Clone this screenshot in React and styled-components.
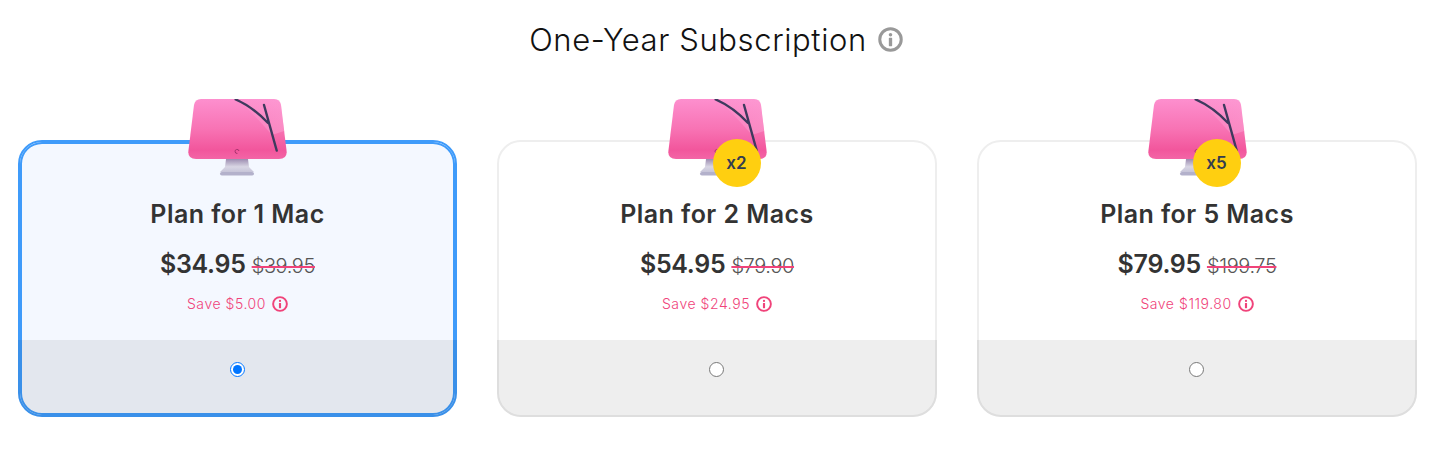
import React, { useState } from 'react'
import styled, { createGlobalStyle } from 'styled-components'

const plans = [
    { name: 'Plan for 1 Mac', price: '$34.95', old: '$39.95', save: 'Save $5.00' },
    { name: 'Plan for 2 Macs', price: '$54.95', old: '$79.90', save: 'Save $24.95', badge: 'x2' },
    { name: 'Plan for 5 Macs', price: '$79.95', old: '$199.75', save: 'Save $119.80', badge: 'x5' },
]

const InfoIcon = ({ size, color }) => (
    <svg width={size} height={size} viewBox="0 0 24 24" fill="none">
        <circle cx="12" cy="12" r="10.3" stroke={color} strokeWidth="2.9" />
        <circle cx="12" cy="7.4" r="1.7" fill={color} />
        <rect x="10.4" y="10.4" width="3.2" height="8" rx="0.6" fill={color} />
    </svg>
)

const MacIcon = ({ id }) => (
    <svg width="99" height="78" viewBox="0 0 99 78" fill="none">
        <defs>
            <linearGradient id={`screen${id}`} x1="0" y1="0" x2="0" y2="1">
                <stop offset="0" stopColor="#fd8fce" />
                <stop offset="0.5" stopColor="#f873b4" />
                <stop offset="0.85" stopColor="#f2569c" />
                <stop offset="1" stopColor="#f365a6" />
            </linearGradient>
            <linearGradient id={`stand${id}`} x1="0" y1="0" x2="0" y2="1">
                <stop offset="0" stopColor="#9c8cb0" />
                <stop offset="0.6" stopColor="#d9d6e4" />
                <stop offset="1" stopColor="#c6c4d8" />
            </linearGradient>
            <linearGradient id={`shine${id}`} x1="0" y1="0" x2="1" y2="1">
                <stop offset="0" stopColor="#ffb4e0" stopOpacity="0.1" />
                <stop offset="1" stopColor="#ffb4e0" stopOpacity="0.4" />
            </linearGradient>
        </defs>
        <path d="M38 60 H60 L61 68 L66 73 H32 L37 68 Z" fill={`url(#stand${id})`} />
        <rect x="32" y="73" width="34" height="3.6" rx="1.8" fill="#b3b1cb" />
        <path
            d="M13 0 H86 Q92 0 93 6 L98.6 52 Q99.4 60 91 60 H8 Q-0.4 60 0.4 52 L6 6 Q7 0 13 0 Z"
            fill={`url(#screen${id})`}
        />
        <path d="M50 0 H86 Q92 0 93 6 L96 32 L84 36 Q70 20 50 0 Z" fill={`url(#shine${id})`} />
        <path d="M47.7 0.5 Q65 8 80 24 M76 6 L88.7 51.5" stroke="#3e3a5e" strokeWidth="2.4" strokeLinecap="round" />
        <path d="M51 52 A2 2 0 1 0 49.4 54.4" stroke="#a8336f" strokeWidth="1" />
    </svg>
)

const Plan = ({ plan, index, selected, onSelect }) => (
    <Card $selected={selected}>
        <IconWrap>
            <MacIcon id={index} />
            {plan.badge ? <Badge>{plan.badge}</Badge> : null}
        </IconWrap>
        <PlanName>{plan.name}</PlanName>
        <PriceRow>
            <Price>{plan.price}</Price>
            <OldPrice>{plan.old}</OldPrice>
        </PriceRow>
        <SaveRow>
            {plan.save}
            <InfoIcon size={16} color="#f0437a" />
        </SaveRow>
        <Footer>
            <Radio type="radio" name="plan" checked={selected} onChange={onSelect} />
        </Footer>
    </Card>
)

const App = () => {
    const [selected, setSelected] = useState(0)
    return (
        <Page>
            <GlobalStyle />
            <Header>
                <Title>One-Year Subscription</Title>
                <InfoIcon size={25} color="#999999" />
            </Header>
            <Cards>
                {plans.map((plan, i) => (
                    <Plan key={plan.name} plan={plan} index={i} selected={selected === i} onSelect={() => setSelected(i)} />
                ))}
            </Cards>
        </Page>
    )
}

const GlobalStyle = createGlobalStyle`
    body {
        margin: 0;
        background: #fff;
        font-family: Inter, "Open Sans", "Liberation Sans", sans-serif;
    }
`

const Page = styled.div`
    width: 1441px;
    height: 457px;
    overflow: hidden;
`

const Header = styled.div`
    display: flex;
    align-items: center;
    justify-content: center;
    gap: 11px;
    height: 79px;
    padding-right: 9px;
    box-sizing: border-box;
`

const Title = styled.h1`
    margin: 0;
    font-size: 31px;
    line-height: 40px;
    font-weight: 300;
    letter-spacing: 0.6px;
    color: #111;
`

const Cards = styled.div`
    display: grid;
    grid-template-columns: repeat(3, 440px);
    gap: 40px;
    padding: 61px 0 0 17px;
`

const Card = styled.div`
    box-sizing: border-box;
    height: 277px;
    margin-left: ${p => (p.$selected ? '1px' : '0')};
    display: flex;
    flex-direction: column;
    align-items: center;
    border: 2px solid ${p => (p.$selected ? '#3f9bfa' : '#eeeeee')};
    border-radius: 24px;
    background: ${p => (p.$selected ? '#f4f8ff' : '#fff')};
    box-shadow: ${p => (p.$selected ? 'inset 0 0 0 2px #3f9bfa' : 'none')};
`

const IconWrap = styled.div`
    position: relative;
    width: 99px;
    height: 78px;
    margin-top: -43px;
    flex: none;
`

const Badge = styled.div`
    position: absolute;
    right: 6px;
    top: 40px;
    width: 48px;
    height: 48px;
    border-radius: 50%;
    background: #ffcf10;
    color: #333c50;
    font-size: 17px;
    font-weight: 600;
    display: flex;
    align-items: center;
    justify-content: center;
`

const PlanName = styled.div`
    margin-top: 21px;
    font-size: 25px;
    line-height: 32px;
    font-weight: 600;
    letter-spacing: 0.45px;
    color: #333;
`

const PriceRow = styled.div`
    display: flex;
    align-items: baseline;
    gap: 6px;
    margin-top: 17px;
`

const Price = styled.span`
    font-size: 25px;
    line-height: 34px;
    font-weight: 600;
    letter-spacing: -0.3px;
    color: #333;
`

const OldPrice = styled.span`
    font-size: 20px;
    font-weight: 300;
    letter-spacing: -0.4px;
    color: #555;
    text-decoration: line-through;
    text-decoration-color: #f0437a;
    text-decoration-thickness: 2px;
`

const SaveRow = styled.div`
    display: flex;
    align-items: center;
    gap: 6px;
    margin-top: 13px;
    font-size: 14px;
    line-height: 20px;
    font-weight: 300;
    letter-spacing: 0.55px;
    color: #f0437a;
`

const Footer = styled.div`
    align-self: stretch;
    flex: 1;
    margin: 26px -2px -2px;
    display: flex;
    align-items: center;
    justify-content: center;
    background: rgba(0, 0, 0, 0.067);
    border-radius: 0 0 24px 24px;
`

const Radio = styled.input`
    width: 15px;
    height: 15px;
    margin: 0 1px 18px 0;
`

export default App
